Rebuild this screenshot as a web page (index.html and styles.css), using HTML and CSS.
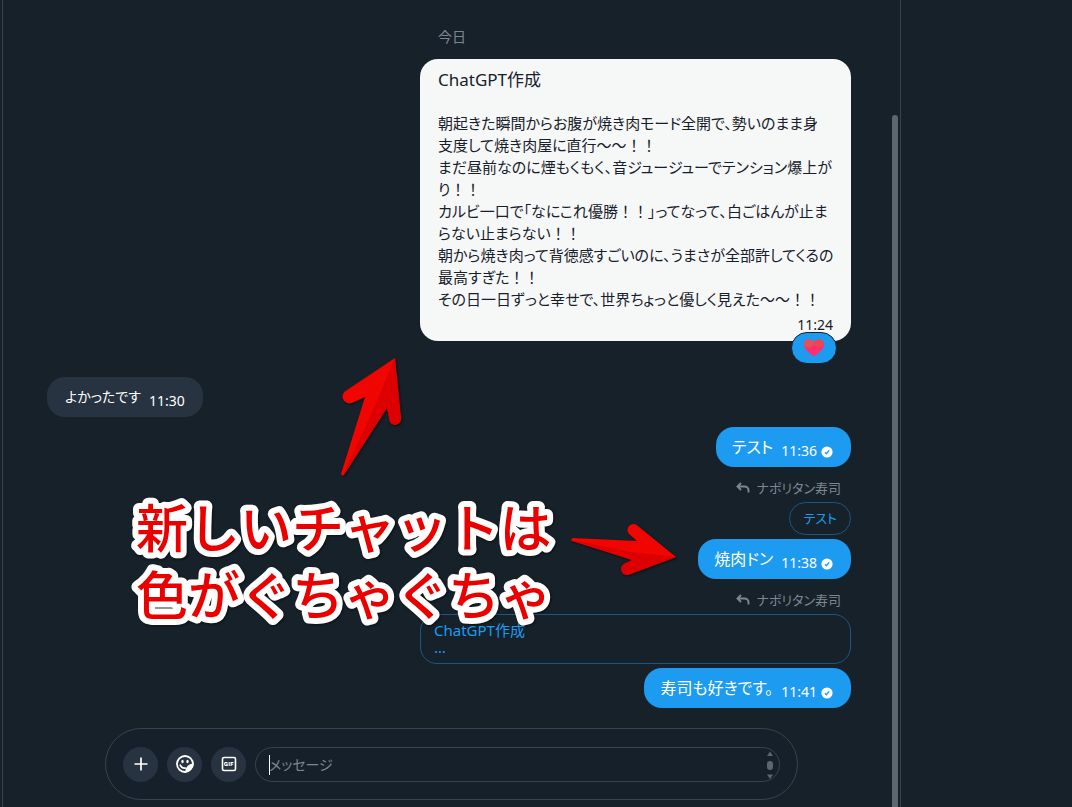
FILE: index.html
```html
<!DOCTYPE html>
<html lang="ja">
<head>
<meta charset="UTF-8">
<meta name="viewport" content="width=device-width, initial-scale=1.0">
<title>メッセージ</title>
<link rel="stylesheet" href="styles.css">
</head>
<body>
<svg class="defs" aria-hidden="true">
  <symbol id="check" viewBox="0 0 12 12">
    <circle cx="6" cy="6" r="5.6" fill="#fff"/>
    <path d="M3.900 6.200l1.500 1.500 2.800-3.400" fill="none" stroke="#1d9bf0" stroke-width="1.300"/>
  </symbol>
  <symbol id="reply" viewBox="0 0 14 12">
    <path d="M5 1L1.500 4.500 5 8M2 4.500h6.500c2.500 0 4 1.500 4 4v2" fill="none" stroke="currentColor" stroke-width="1.900"/>
  </symbol>
</svg>
<div class="layout">
  <main class="chat">
    <div class="messages">
      <div class="date">今日</div>

      <div class="message light">
        <h2>ChatGPT作成</h2>
        <p>朝起きた瞬間からお腹が焼き肉モード全開で、勢いのまま身<br>
        支度して焼き肉屋に直行～～<span class="full">！！</span><br>
        まだ昼前なのに煙もくもく、音ジュージューでテンション爆上が<br>
        り<span class="full">！！</span><br>
        カルビ一口で「なにこれ優勝<span class="full">！！</span>」ってなって、白ごはんが止ま<br>
        らない止まらない<span class="full">！！</span><br>
        朝から焼き肉って背徳感すごいのに、うまさが全部許してくるの<br>
        最高すぎた<span class="full">！！</span><br>
        その日一日ずっと幸せで、世界ちょっと優しく見えた～～<span class="full">！！</span></p>
        <time>11:24</time>
        <button class="reaction" aria-label="ハート">
          <svg width="22" height="20" viewBox="0 0 22 20">
            <path d="M11 18.500C6 15 1 11 1 6.500C1 3.500 3.200 1.500 6 1.500c2.200 0 4 1.200 5 3 1-1.800 2.800-3 5-3 2.800 0 5 2 5 5C21 11 16 15 11 18.500z" fill="#fb2f72"/>
            <path d="M1.200 7C1 3.500 3.200 1.500 6 1.500c2.200 0 4 1.200 5 3 0 3-2 5-5 5-2 0-4-1-4.800-2.500z" fill="#e9504f"/>
            <path d="M11 4.500c1-1.800 2.800-3 5-3 2.800 0 5 2 5 5-1 2-3 3-5 3-3 0-5-2-5-5z" fill="#f04450"/>
          </svg>
        </button>
      </div>

      <div class="message gray"><span>よかったです</span><time>11:30</time></div>

      <div class="message blue"><span>テスト</span><time>11:36</time><svg class="check"><use href="#check"/></svg></div>

      <div class="reply-to"><svg width="14" height="12"><use href="#reply"/></svg>ナポリタン寿司</div>
      <div class="quote">テスト</div>
      <div class="message blue"><span>焼肉ドン</span><time>11:38</time><svg class="check"><use href="#check"/></svg></div>

      <div class="reply-to"><svg width="14" height="12"><use href="#reply"/></svg>ナポリタン寿司</div>
      <div class="quote long">ChatGPT作成<br>…</div>
      <div class="message blue"><span>寿司も好きです。</span><time>11:41</time><svg class="check"><use href="#check"/></svg></div>
    </div>

    <form class="composer">
      <button type="button" aria-label="追加">
        <svg width="20" height="20" viewBox="0 0 20 20"><path d="M10 3.500v13M3.500 10h13" stroke="#fff" stroke-width="1.700"/></svg>
      </button>
      <button type="button" aria-label="絵文字">
        <svg width="20" height="20" viewBox="0 0 20 20">
          <path d="M10 2a8 8 0 1 0 0 16c4 0 8-4.500 8-8a8 8 0 0 0-8-8z" fill="none" stroke="#fff" stroke-width="1.800"/>
          <path d="M18.500 9.500c-5 0-8 3.500-8.500 9 4.500 0 8.500-4.500 8.500-9z" fill="#fff"/>
          <ellipse cx="7.500" cy="7.500" rx="1.200" ry="1.700" fill="#fff"/>
          <ellipse cx="12.500" cy="7.500" rx="1.200" ry="1.700" fill="#fff"/>
          <path d="M5 10.500c1 3 3 4 6 3.500" fill="none" stroke="#fff" stroke-width="1.700"/>
        </svg>
      </button>
      <button type="button" aria-label="GIF">
        <svg width="20" height="20" viewBox="0 0 20 20">
          <rect x="3.500" y="3.500" width="13" height="13" rx="1.500" fill="none" stroke="#fff" stroke-width="1.600"/>
          <path d="M8.500 8.500H6.600c-.6 0-.9.400-.9.900v1.200c0 .5.300.9.900.9h1.600v-1.400H7.200M10.200 7.900v4.200M12.100 12.100V8.500h2.400M12.100 10.300h2" fill="none" stroke="#fff" stroke-width="1.100"/>
        </svg>
      </button>
      <div class="field">
        <textarea rows="1" placeholder="メッセージ" aria-label="メッセージ"></textarea>
        <span class="caret"></span>
        <svg class="spin" width="6" height="28" viewBox="0 0 6 28">
          <path d="M0 5l3-4.500L6 5zM0 23.500h6L3 28z" fill="#5b6670"/>
          <rect y="10" width="6" height="9" rx="3" fill="#5b6670"/>
        </svg>
      </div>
    </form>

    <div class="scrollbar"></div>
  </main>
  <aside class="side"></aside>
</div>

<!-- notes drawn over the chat -->
<svg class="note" width="440" height="170" viewBox="0 0 440 170">
  <text x="12" y="66">新しいチャットは</text>
  <text x="12" y="133">色がぐちゃぐちゃ</text>
</svg>
<svg class="arrow arrow-up" width="70" height="126" viewBox="0 0 70 126">
  <path d="M60 4L12 36a6 6 0 0 0 5 13L30 43 6 120q1 3 3 1L52 54l3 14a6 6 0 0 0 11-3z" fill="#f00500"/>
  <path d="M60 4L40 52 8 121l44-67 3 14a6 6 0 0 0 11-3z" fill="#dc0000"/>
</svg>
<svg class="arrow arrow-right" width="112" height="60" viewBox="0 0 112 60">
  <path d="M108 36L70 5a6 6 0 0 0-9 8l8 7L5 17q-3 1-1 3l60 19-8 4a6 6 0 0 0 4 11z" fill="#f00500"/>
  <path d="M108 36L62 31 4 19l60 20-8 4a6 6 0 0 0 4 11z" fill="#dc0000"/>
</svg>
</body>
</html>
```

FILE: styles.css
```css
* {
  box-sizing: border-box;
}

body {
  margin: 0;
  background-color: #17212a;
  color: #fff;
  font-family: "Noto Sans", "Noto Sans CJK JP", sans-serif;
  font-size: 15px;
  line-height: 22px;
  font-feature-settings: "palt";
}

p {
  margin: 0;
}

button {
  border: none;
  padding: 0;
  cursor: pointer;
}

.defs {
  display: none;
}

.layout {
  display: flex;
  min-height: 100vh;
  padding-left: 2px;
}

.side {
  width: 171px;
}

/* Chat column */
.chat {
  position: relative;
  flex: 1;
  border-left: 1px solid #38444d;
  border-right: 1px solid #38444d;
}

.messages {
  display: flex;
  flex-direction: column;
  align-items: flex-end;
  padding: 26px 49px 20px 44px;
}

.date {
  align-self: center;
  margin-bottom: 11px;
  padding-left: 6px;
  color: #7d8790;
  font-size: 14px;
}

.message {
  display: flex;
  align-items: flex-end;
  gap: 8px;
  padding: 9px 18px;
  border-radius: 18px;
  white-space: nowrap;
}

.message time {
  font-size: 14px;
  line-height: 14px;
}

.light {
  position: relative;
  display: block;
  width: 431px;
  padding: 10px 18px 9px;
  background-color: #f6f8f8;
  color: #17202a;
}

.light h2 {
  margin: 0 0 21px;
  font-size: 17px;
  font-weight: 400;
}

.light time {
  display: block;
  margin-top: 8px;
  text-align: right;
}

/* keeps the wide exclamation marks */
.full {
  font-feature-settings: normal;
}

.reaction {
  position: absolute;
  right: 14px;
  bottom: -23px;
  display: flex;
  align-items: center;
  justify-content: center;
  width: 46px;
  height: 32px;
  border: 1px solid #17202a;
  border-radius: 16px;
  background-color: #1d9bf0;
}

.gray {
  align-self: flex-start;
  margin: 36px 0 10px;
  background-color: #273340;
  font-size: 14px;
}

.blue {
  padding: 9px 18px 9px 16px;
  background-color: #1d9bf0;
  font-size: 16px;
}

.check {
  width: 12px;
  height: 12px;
  margin-left: -4px;
}

.reply-to {
  display: flex;
  align-items: center;
  gap: 6px;
  margin: 10px 10px 3px 0;
  color: #7d8790;
  font-size: 13px;
}

.quote {
  margin-bottom: 4px;
  padding: 7px 13px;
  border: 1px solid #1c5686;
  border-radius: 17px;
  color: #1d9bf0;
  font-size: 13px;
  line-height: 17px;
}

.long {
  width: 431px;
  font-size: 15px;
}

/* Message form */
.composer {
  display: flex;
  align-items: center;
  gap: 9px;
  margin: 0 102px;
  height: 72px;
  padding: 0 17px;
  border: 1px solid #38444d;
  border-radius: 36px;
  background-color: #15202b;
}

.composer button {
  display: flex;
  align-items: center;
  justify-content: center;
  width: 35px;
  height: 35px;
  border-radius: 50%;
  background-color: #273340;
}

.field {
  position: relative;
  flex: 1;
  height: 35px;
  border: 1px solid #38444d;
  border-radius: 18px;
}

.field textarea {
  display: block;
  width: 100%;
  height: 33px;
  padding: 6px 13px;
  border: none;
  outline: none;
  resize: none;
  overflow: hidden;
  background: none;
  color: #fff;
  font: inherit;
  font-size: 14px;
  font-feature-settings: "palt";
}

.field textarea::placeholder {
  color: #7d8790;
}

.caret {
  position: absolute;
  left: 13px;
  top: 7px;
  width: 1px;
  height: 20px;
  background-color: #fff;
}

.spin {
  position: absolute;
  right: 6px;
  top: 3px;
}

.scrollbar {
  position: absolute;
  top: 115px;
  right: 2px;
  bottom: 0;
  width: 6px;
  border-radius: 3px 3px 0 0;
  background-color: #5b6670;
}

/* Notes over the chat */
.note {
  position: absolute;
  left: 124px;
  top: 482px;
  fill: #eb0000;
  stroke: #fff;
  stroke-width: 12px;
  stroke-linejoin: round;
  paint-order: stroke;
  font-family: "Noto Sans CJK JP", sans-serif;
  font-size: 52px;
  font-weight: 500;
  font-feature-settings: normal;
  filter: drop-shadow(1px 1px 1px #0008);
}

.arrow {
  position: absolute;
  filter: drop-shadow(1px 1px 1px #0008);
}

.arrow-up {
  left: 335px;
  top: 354px;
}

.arrow-right {
  left: 568px;
  top: 521px;
}
```
